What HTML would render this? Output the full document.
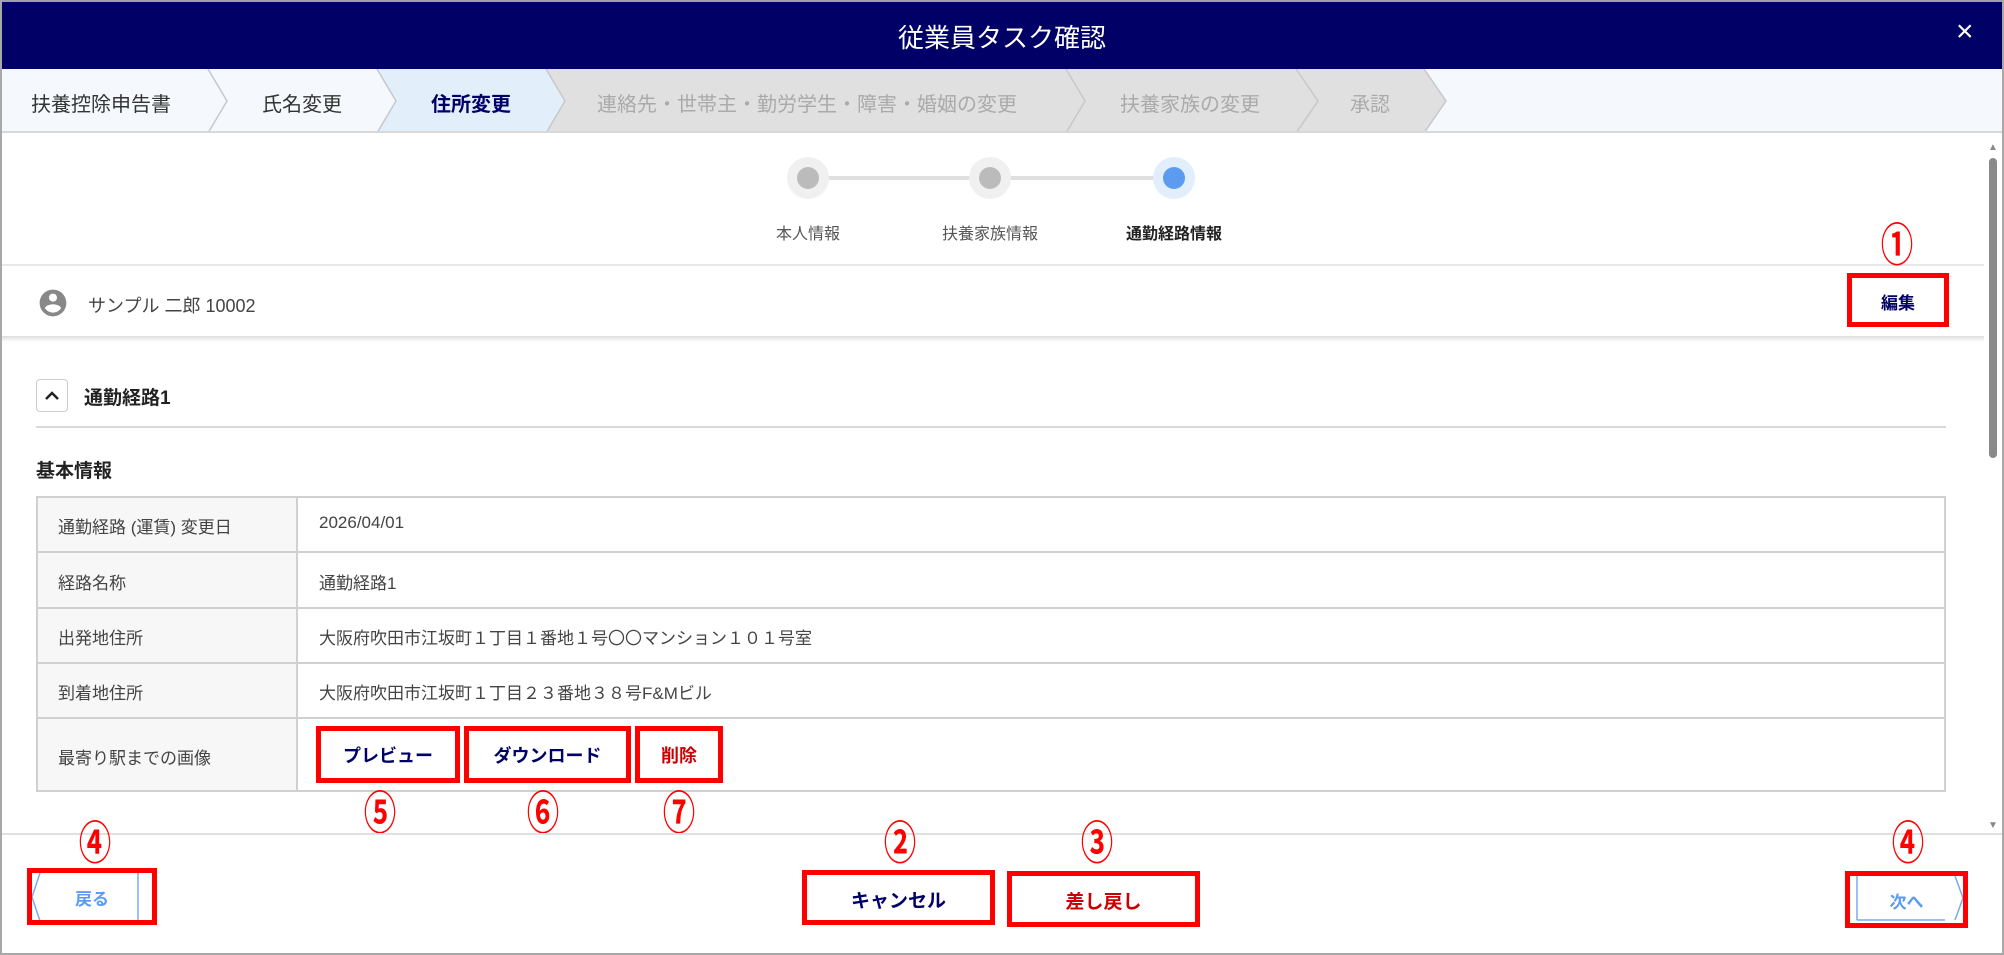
<!DOCTYPE html>
<html><head><meta charset="utf-8"><style>
*{box-sizing:border-box;margin:0;padding:0}
body{width:2004px;height:955px;overflow:hidden;background:#fff;font-family:"Liberation Sans","Noto Sans CJK JP",sans-serif;position:relative;color:#333}
.a{position:absolute}
.frame{left:0;top:0;width:2004px;height:955px;border:2px solid #a8a8a8;border-top:0}
.hdr{left:0;top:0;width:2004px;height:69px;background:#000066;border-top:2px solid #a0a0a0}
.red{border:5px solid #f00;position:absolute}
.num{position:absolute;color:#f00;font-size:38px;font-weight:bold;transform:translateX(-50%) scale(0.85,1.2);transform-origin:50% 0;line-height:1}
.lbl{font-size:17px;color:#444}
.row{position:absolute;left:36px;width:1910px;border-bottom:2px solid #d0d0d0}
</style></head><body>
<div class="a hdr"></div>
<div class="a" style="left:0;top:18px;width:2004px;text-align:center;color:#fff;font-size:26px">従業員タスク確認</div>
<div class="a" style="left:1956px;top:15px;color:#fff;font-size:30px">×</div>

<svg class="a" style="left:0;top:69px" width="2004" height="64">
<rect x="0" y="0" width="2004" height="64" fill="#f5f9fd"/>
<polygon points="377,0 546,0 565,32 546,64 377,64 396,32" fill="#e3eefb"/>
<polygon points="546,0 1066,0 1085,32 1066,64 546,64 565,32" fill="#e0e0e0"/>
<polygon points="1066,0 1296,0 1318,32 1296,64 1066,64 1085,32" fill="#e0e0e0"/>
<polygon points="1296,0 1424,0 1446,32 1424,64 1296,64 1318,32" fill="#e0e0e0"/>
<g fill="none" stroke="#c8c8c8" stroke-width="1.5">
<polyline points="208,0 227,32 208,64"/><polyline points="377,0 396,32 377,64"/><polyline points="546,0 565,32 546,64"/><polyline points="1066,0 1085,32 1066,64"/><polyline points="1296,0 1318,32 1296,64"/><polyline points="1424,0 1446,32 1424,64"/>
</g>
<line x1="0" y1="63" x2="2004" y2="63" stroke="#d8d8d8" stroke-width="2"/>
</svg>
<div class="a" style="left:31px;top:88px;font-size:20px;color:#333">扶養控除申告書</div>
<div class="a" style="left:262px;top:88px;font-size:20px;color:#333">氏名変更</div>
<div class="a" style="left:431px;top:88px;font-size:20px;color:#000066;font-weight:bold">住所変更</div>
<div class="a" style="left:597px;top:88px;font-size:20px;color:#aaa">連絡先・世帯主・勤労学生・障害・婚姻の変更</div>
<div class="a" style="left:1120px;top:88px;font-size:20px;color:#aaa">扶養家族の変更</div>
<div class="a" style="left:1350px;top:88px;font-size:20px;color:#aaa">承認</div>

<div class="a" style="left:808px;top:176px;width:366px;height:4px;background:#e0e0e0"></div>
<div class="a" style="left:787px;top:157px;width:42px;height:42px;border-radius:50%;background:#f0f0f0"></div>
<div class="a" style="left:797px;top:167px;width:22px;height:22px;border-radius:50%;background:#bbb"></div>
<div class="a" style="left:969px;top:157px;width:42px;height:42px;border-radius:50%;background:#f0f0f0"></div>
<div class="a" style="left:979px;top:167px;width:22px;height:22px;border-radius:50%;background:#bbb"></div>
<div class="a" style="left:1153px;top:157px;width:42px;height:42px;border-radius:50%;background:#e1eefc"></div>
<div class="a" style="left:1163px;top:167px;width:22px;height:22px;border-radius:50%;background:#5b9cf0"></div>
<div class="a" style="left:748px;top:220px;width:120px;text-align:center;font-size:16px;color:#555">本人情報</div>
<div class="a" style="left:920px;top:220px;width:140px;text-align:center;font-size:16px;color:#555">扶養家族情報</div>
<div class="a" style="left:1104px;top:220px;width:140px;text-align:center;font-size:16px;color:#222;font-weight:bold">通勤経路情報</div>

<div class="a" style="left:2px;top:264px;width:1982px;height:2px;background:#e8e8e8"></div>
<div class="a" style="left:2px;top:336px;width:1982px;height:6px;background:linear-gradient(#ddd,#fff)"></div>
<svg class="a" style="left:37px;top:287px" width="32" height="32" viewBox="0 0 24 24"><path fill="#888" d="M12 2C6.48 2 2 6.48 2 12s4.48 10 10 10 10-4.48 10-10S17.52 2 12 2zm0 3c1.66 0 3 1.34 3 3s-1.34 3-3 3-3-1.34-3-3 1.34-3 3-3zm0 14.2c-2.5 0-4.71-1.28-6-3.22.03-1.99 4-3.08 6-3.08 1.99 0 5.97 1.09 6 3.08-1.29 1.94-3.5 3.22-6 3.22z"/></svg>
<div class="a" style="left:88px;top:292px;font-size:18px;color:#444">サンプル 二郎 10002</div>
<div class="num" style="left:1897px;top:224px">①</div>
<div class="red" style="left:1847px;top:273px;width:102px;height:54px"></div>
<div class="a" style="left:1847px;top:289px;width:102px;text-align:center;font-size:17px;font-weight:bold;color:#000066">編集</div>

<div class="a" style="left:1988px;top:142px;font-size:10px;color:#888">▲</div>
<div class="a" style="left:1989px;top:158px;width:8px;height:300px;border-radius:4px;background:#8a8a8a"></div>
<div class="a" style="left:1988px;top:820px;font-size:10px;color:#888">▼</div>

<div class="a" style="left:36px;top:379px;width:32px;height:33px;border:1px solid #ccc;border-radius:4px;text-align:center"><svg width="20" height="20" style="margin-top:6px" viewBox="0 0 20 20"><polyline points="4,13 10,7 16,13" fill="none" stroke="#222" stroke-width="2.5"/></svg></div>
<div class="a" style="left:84px;top:383px;font-size:19px;font-weight:bold;color:#222">通勤経路1</div>
<div class="a" style="left:36px;top:426px;width:1910px;height:2px;background:#d8d8d8"></div>

<div class="a" style="left:36px;top:456px;font-size:19px;font-weight:bold;color:#222">基本情報</div>

<div class="a" style="left:36px;top:496px;width:1910px;height:296px;border:2px solid #d0d0d0;background:#fff"></div>
<div class="a" style="left:38px;top:498px;width:260px;height:292px;background:#f7f7f7;border-right:2px solid #d0d0d0"></div>
<div class="row" style="top:551px"></div>
<div class="row" style="top:607px"></div>
<div class="row" style="top:662px"></div>
<div class="row" style="top:717px"></div>
<div class="a lbl" style="left:58px;top:513px">通勤経路 (運賃) 変更日</div>
<div class="a lbl" style="left:319px;top:513px">2026/04/01</div>
<div class="a lbl" style="left:58px;top:569px">経路名称</div>
<div class="a lbl" style="left:319px;top:569px">通勤経路1</div>
<div class="a lbl" style="left:58px;top:624px">出発地住所</div>
<div class="a lbl" style="left:319px;top:624px">大阪府吹田市江坂町１丁目１番地１号〇〇マンション１０１号室</div>
<div class="a lbl" style="left:58px;top:679px">到着地住所</div>
<div class="a lbl" style="left:319px;top:679px">大阪府吹田市江坂町１丁目２３番地３８号F&amp;Mビル</div>
<div class="a lbl" style="left:58px;top:744px">最寄り駅までの画像</div>

<div class="red" style="left:316px;top:726px;width:144px;height:57px"></div>
<div class="a" style="left:316px;top:742px;width:144px;text-align:center;font-size:18px;font-weight:bold;color:#000066">プレビュー</div>
<div class="red" style="left:464px;top:726px;width:167px;height:57px"></div>
<div class="a" style="left:464px;top:742px;width:167px;text-align:center;font-size:18px;font-weight:bold;color:#000066">ダウンロード</div>
<div class="red" style="left:635px;top:726px;width:88px;height:57px"></div>
<div class="a" style="left:635px;top:742px;width:88px;text-align:center;font-size:18px;font-weight:bold;color:#cc0000">削除</div>
<div class="num" style="left:380px;top:792px">⑤</div>
<div class="num" style="left:543px;top:792px">⑥</div>
<div class="num" style="left:679px;top:792px">⑦</div>

<div class="a" style="left:2px;top:833px;width:2000px;height:2px;background:#e0e0e0"></div>
<div class="num" style="left:95px;top:822px">④</div>
<div class="num" style="left:900px;top:822px">②</div>
<div class="num" style="left:1097px;top:822px">③</div>
<div class="num" style="left:1908px;top:822px">④</div>

<svg class="a" style="left:32px;top:873px" width="110" height="48"><polyline points="8,0 0,24 8,48" fill="none" stroke="#7aaaf0" stroke-width="1.5"/><line x1="106" y1="0" x2="106" y2="48" stroke="#7aaaf0" stroke-width="1.5"/></svg>
<div class="red" style="left:27px;top:868px;width:130px;height:57px"></div>
<div class="a" style="left:27px;top:885px;width:130px;text-align:center;font-size:17px;font-weight:bold;color:#5b9cf0">戻る</div>

<div class="red" style="left:802px;top:870px;width:193px;height:55px"></div>
<div class="a" style="left:802px;top:886px;width:193px;text-align:center;font-size:19px;font-weight:bold;color:#000066">キャンセル</div>
<div class="red" style="left:1007px;top:871px;width:193px;height:56px"></div>
<div class="a" style="left:1007px;top:887px;width:193px;text-align:center;font-size:19px;font-weight:bold;color:#cc0000">差し戻し</div>

<svg class="a" style="left:1855px;top:876px" width="110" height="48"><line x1="2" y1="0" x2="2" y2="44" stroke="#7aaaf0" stroke-width="1.5"/><line x1="2" y1="44" x2="90" y2="44" stroke="#7aaaf0" stroke-width="1.5"/><polyline points="100,0 108,22 100,44" fill="none" stroke="#7aaaf0" stroke-width="1.5"/></svg>
<div class="red" style="left:1845px;top:871px;width:123px;height:57px"></div>
<div class="a" style="left:1845px;top:888px;width:123px;text-align:center;font-size:17px;font-weight:bold;color:#5b9cf0">次へ</div>

<div class="a frame"></div>
</body></html>
